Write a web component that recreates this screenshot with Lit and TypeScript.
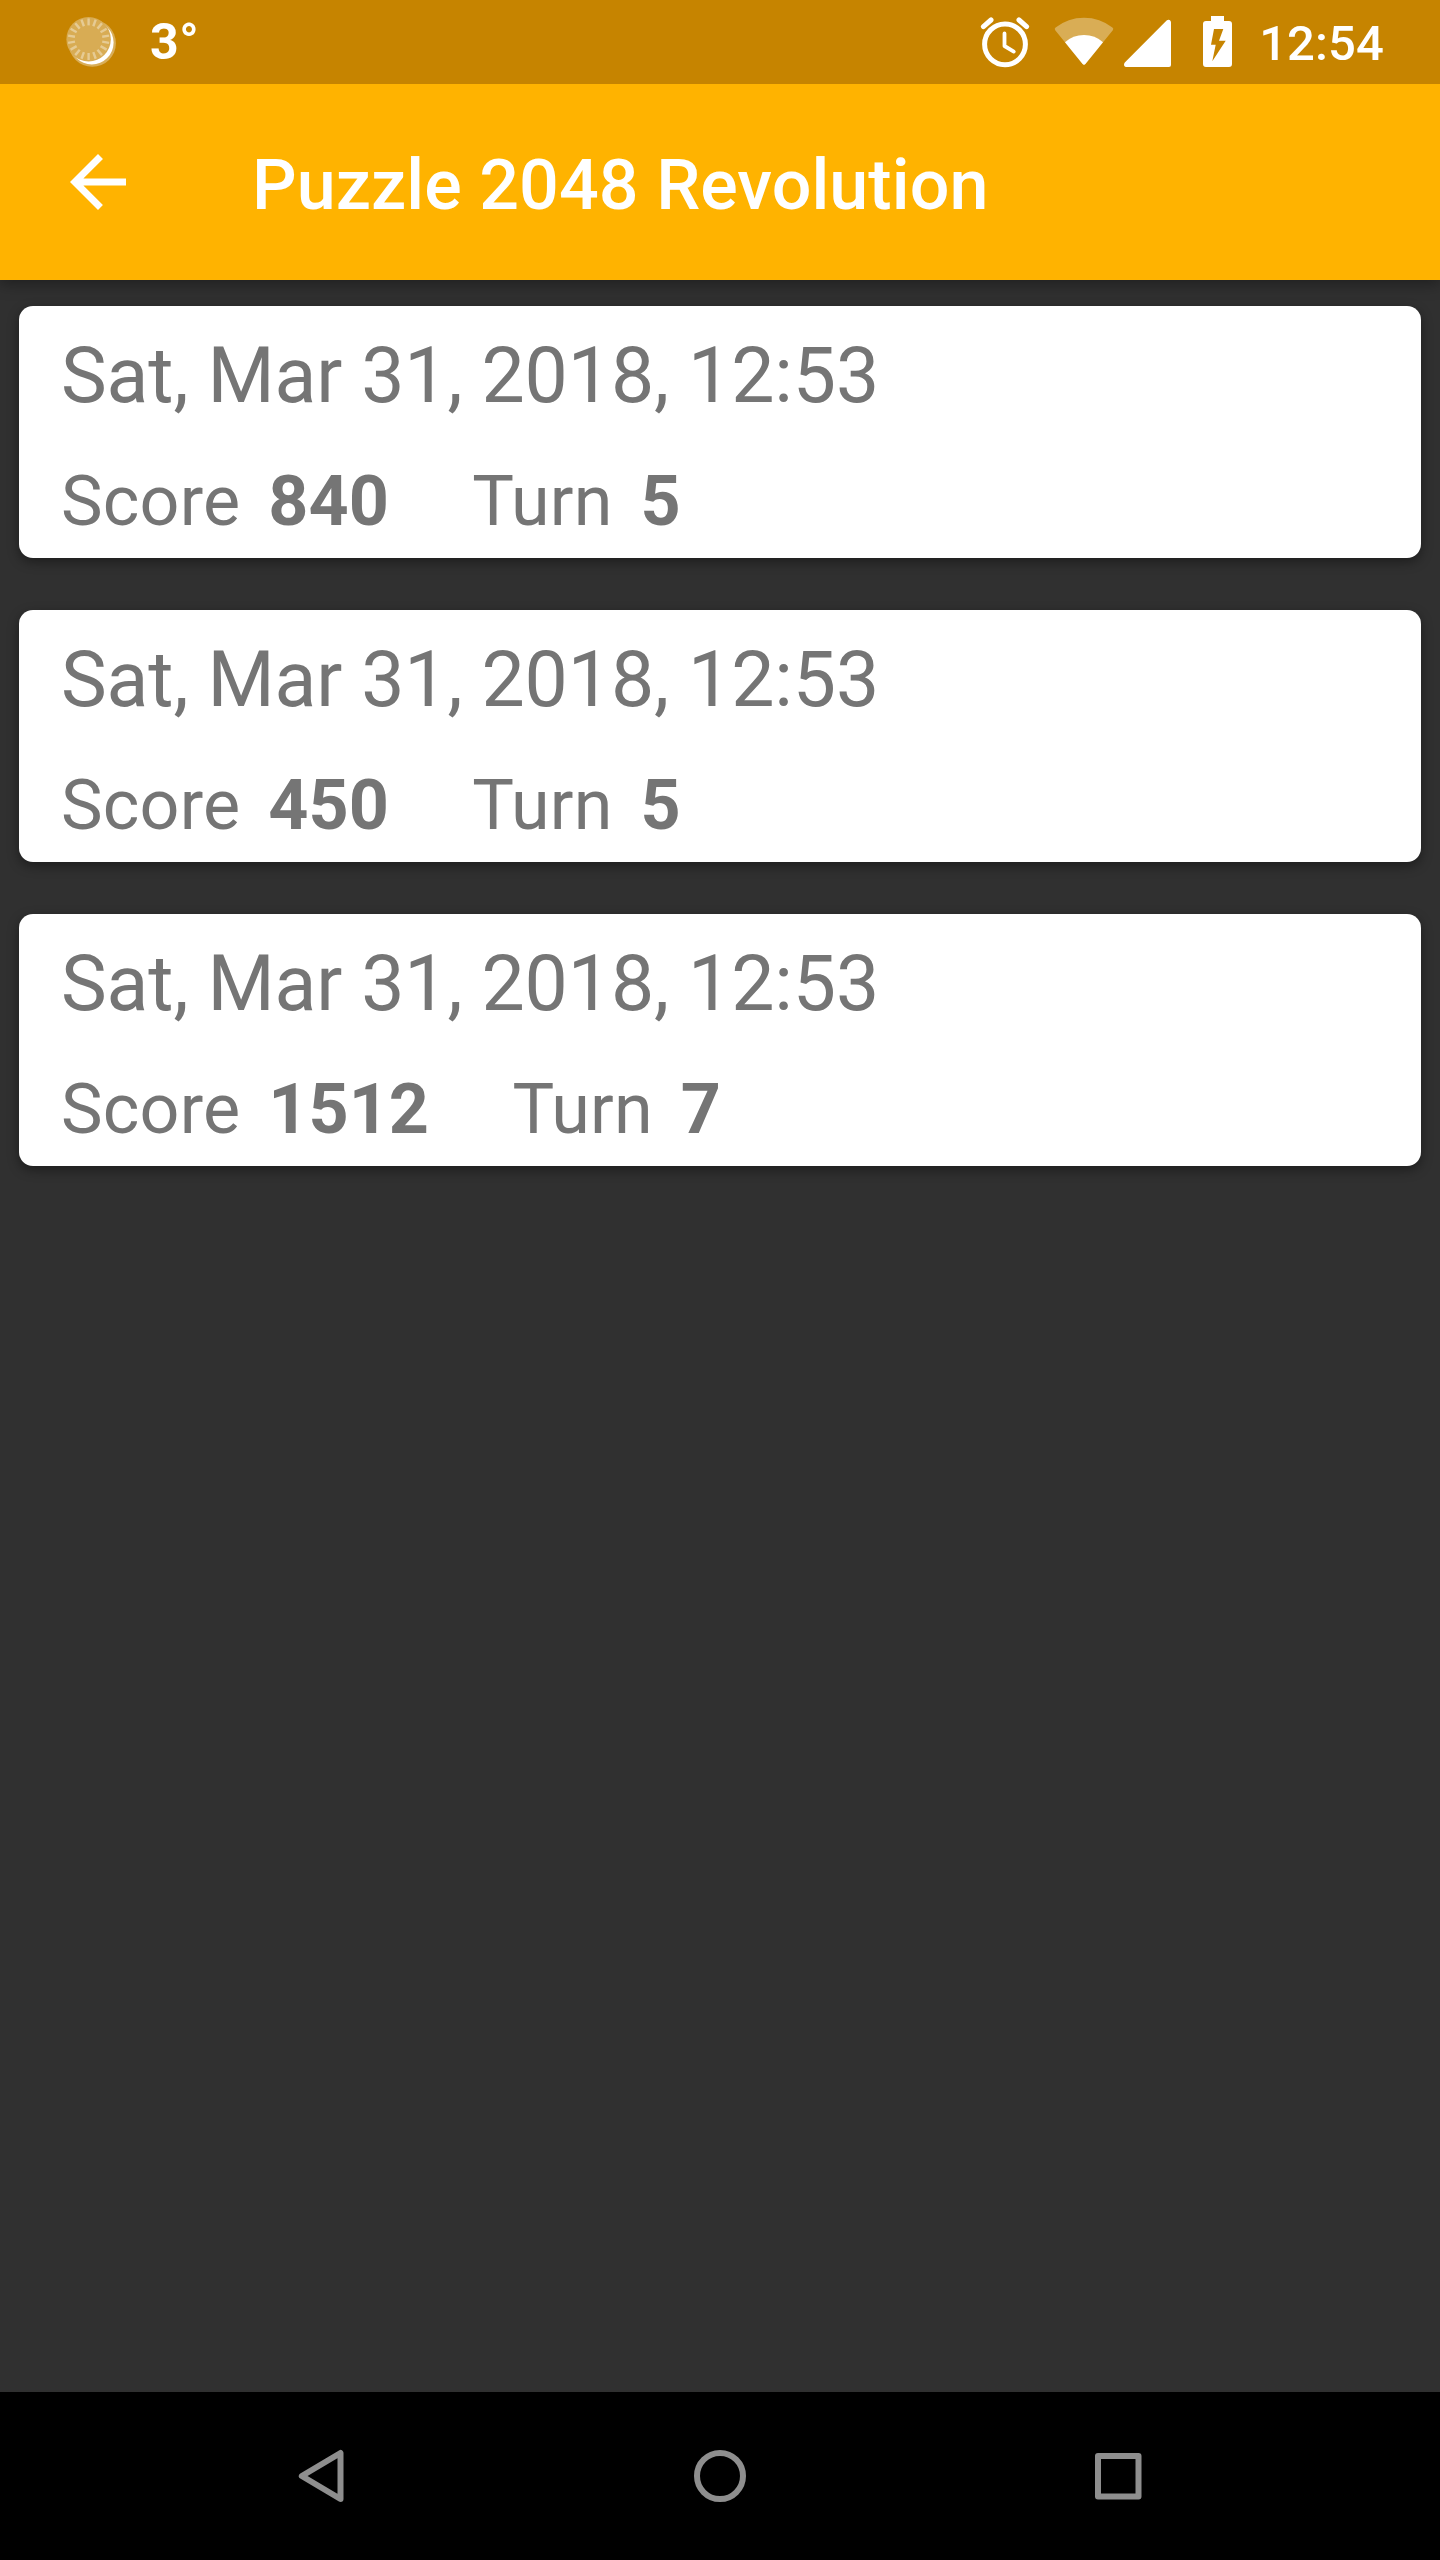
import { LitElement, html, css, svg } from "lit";
import { customElement, property } from "lit/decorators.js";

interface Result {
  date: string;
  score: number;
  turn: number;
}

const RESULTS: Result[] = [
  { date: "Sat, Mar 31, 2018, 12:53", score: 840, turn: 5 },
  { date: "Sat, Mar 31, 2018, 12:53", score: 450, turn: 5 },
  { date: "Sat, Mar 31, 2018, 12:53", score: 1512, turn: 7 },
];

const RAYS = Array.from({ length: 18 }, (_, i) => i * 20);

@customElement("status-bar")
class StatusBar extends LitElement {
  static styles = css`
    :host {
      display: flex;
      position: relative;
      z-index: 1;
      height: 84px;
      box-sizing: border-box;
      padding: 0 56px 0 60px;
      background: #c68400;
      color: #fff;
      font-family: Roboto, sans-serif;
      font-size: 49px;
      line-height: 84px;
    }
    svg {
      display: block;
      flex: none;
      height: 84px;
    }
    .temp {
      font-weight: 700;
      font-size: 50px;
      margin-left: 30px;
      letter-spacing: 0.5px;
      line-height: 84px;
    }
    .system {
      display: flex;
      margin-left: auto;
    }
    .clock {
      font-weight: 500;
      line-height: 88px;
      margin-left: 25px;
      letter-spacing: 0.1px;
    }
  `;

  render() {
    return html`
      <svg width="60" viewBox="60 0 60 84">
        <circle cx="92.3" cy="43.2" r="23.6" fill="#d9ae58" />
        <circle cx="91.8" cy="42.6" r="21.8" fill="#fff" />
        <circle cx="88.6" cy="39.2" r="22.2" fill="#d8ac54" />
        ${RAYS.map(
          (a) => svg`<path d="M88.6 18.4v7" stroke="#e6cb94" stroke-width="2.4"
            transform="rotate(${a} 88.6 39.2)" />`
        )}
      </svg>
      <span class="temp">3°</span>
      <div class="system">
        <svg width="254" viewBox="980 0 254 84">
          <g fill="none" stroke="#fff" stroke-linecap="round" stroke-linejoin="round">
            <circle cx="1005" cy="44.3" r="20.4" stroke-width="5" />
            <path d="M1004.5 33.5v12.5l9.3 5.6" stroke-width="3.8" />
            <path d="M983.4 26.6l7.6-6.6M1026.6 26.6l-7.6-6.6" stroke-width="5" />
          </g>
          <path
            d="M1055.2 30.2q-1.2-1.5.4-2.6Q1068 17.8 1084 17.8t28.4 9.8q1.6 1.1.4 2.6l-27.2 33.6q-1.6 1.8-3.2 0z"
            fill="#d9ad55"
          />
          <path
            d="M1065 42.2Q1073 35 1084 35t19 7.2l-17.4 21.6q-1.6 1.8-3.2 0z"
            fill="#fff"
          />
          <path
            d="M1124.8 62.4L1166.6 20.6q1.4-1.2 3-.6 1.4.6 1.4 2.4V65q0 2-2 2h-42.4q-2 0-2.5-1.6-.5-1.6.7-3z"
            fill="#fff"
          />
          <path
            fill-rule="evenodd"
            d="M1211 16h13v5h5q3 0 3 3v40q0 3-3 3h-23q-3 0-3-3V24q0-3 3-3h5zM1214 29l-3 15.7h4.7L1212.3 61.3 1225.7 40.7H1219L1223.3 29z"
            fill="#fff"
          />
        </svg>
        <span class="clock">12:54</span>
      </div>
    `;
  }
}

@customElement("app-toolbar")
class AppToolbar extends LitElement {
  @property() heading = "";

  static styles = css`
    :host {
      display: flex;
      align-items: center;
      height: 196px;
      padding-left: 56px;
      background: #ffb300;
      color: #fff;
      font: 500 70px/82px Roboto, sans-serif;
      box-shadow: 0 4px 14px rgba(0, 0, 0, 0.35);
    }
    .heading {
      margin: 6px 0 0 112px;
      font: inherit;
      letter-spacing: 0.07px;
    }
  `;

  render() {
    return html`
      <svg width="84" height="84" viewBox="0 0 24 24" fill="#fff">
        <path d="M20 11H7.83l5.59-5.59L12 4l-8 8 8 8 1.41-1.41L7.83 13H20v-2z" />
      </svg>
      <h1 class="heading">${this.heading}</h1>
    `;
  }
}

@customElement("result-card")
class ResultCard extends LitElement {
  @property({ attribute: false }) result!: Result;

  static styles = css`
    :host {
      display: flex;
      flex-direction: column;
      justify-content: space-between;
      box-sizing: border-box;
      height: 252px;
      padding: 25px 42px 16px;
      border-radius: 14px;
      background: #fff;
      color: #757575;
      font-family: Roboto, sans-serif;
      box-shadow: 0 4px 12px rgba(0, 0, 0, 0.4);
    }
    .date {
      font-size: 77px;
      line-height: 90px;
      letter-spacing: -0.13px;
    }
    .stats {
      display: flex;
      font-size: 70px;
      line-height: 82px;
    }
    .label {
      letter-spacing: 0.2px;
    }
    .value {
      margin: 0 83.5px 0 28px;
      font-weight: 700;
    }
  `;

  render() {
    const { date, score, turn } = this.result;
    return html`
      <div class="date">${date}</div>
      <div class="stats">
        <span class="label">Score</span><span class="value">${score}</span>
        <span class="label">Turn</span><span class="value">${turn}</span>
      </div>
    `;
  }
}

@customElement("navigation-bar")
class NavigationBar extends LitElement {
  static styles = css`
    :host {
      display: flex;
      align-items: center;
      justify-content: space-between;
      height: 168px;
      padding: 0 280px;
      background: #000;
    }
    svg {
      fill: none;
      stroke: #8e8e8e;
      stroke-width: 6;
      stroke-linejoin: round;
    }
  `;

  render() {
    return html`
      <svg width="84" height="84"><path d="M60.5 19v46L21.8 42z" /></svg>
      <svg width="84" height="84"><circle cx="42" cy="42" r="23" /></svg>
      <svg width="84" height="84"><rect x="22" y="22" width="40.5" height="40.5" /></svg>
    `;
  }
}

@customElement("app-root")
class AppRoot extends LitElement {
  static styles = css`
    :host {
      display: flex;
      flex-direction: column;
      height: 2560px;
      background: #303030;
    }
    .list {
      flex: 1;
      display: flex;
      flex-direction: column;
      gap: 52px;
      padding: 26px 19px;
    }
  `;

  render() {
    return html`
      <status-bar></status-bar>
      <app-toolbar heading="Puzzle 2048 Revolution"></app-toolbar>
      <main class="list">
        ${RESULTS.map((r) => html`<result-card .result=${r}></result-card>`)}
      </main>
      <navigation-bar></navigation-bar>
    `;
  }
}
